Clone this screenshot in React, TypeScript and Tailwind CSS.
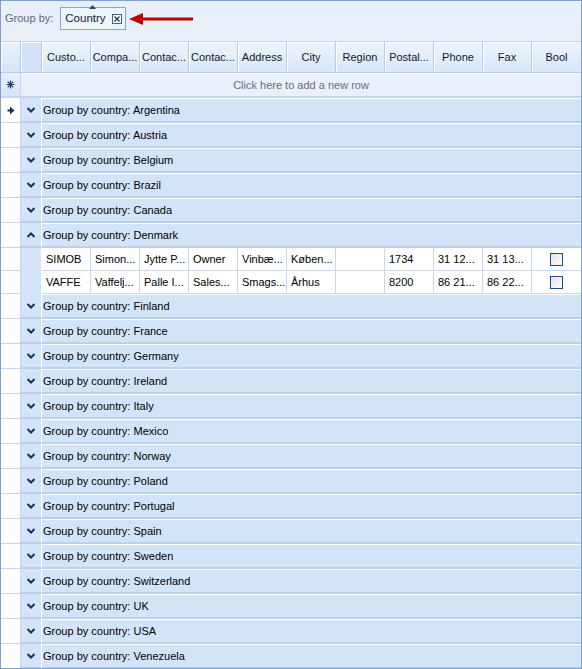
import React from 'react'

const COLUMNS = ['Custo...', 'Compa...', 'Contac...', 'Contac...', 'Address', 'City', 'Region', 'Postal...', 'Phone', 'Fax', 'Bool']

const BEFORE = ['Argentina', 'Austria', 'Belgium', 'Brazil', 'Canada']
const AFTER = ['Finland', 'France', 'Germany', 'Ireland', 'Italy', 'Mexico', 'Norway', 'Poland', 'Portugal', 'Spain', 'Sweden', 'Switzerland', 'UK', 'USA', 'Venezuela']

const ROWS = [
  ['SIMOB', 'Simon...', 'Jytte P...', 'Owner', 'Vinbæ...', 'Køben...', '', '1734', '31 12...', '31 13...'],
  ['VAFFE', 'Vaffelj...', 'Palle I...', 'Sales...', 'Smags...', 'Århus', '', '8200', '86 21...', '86 22...'],
]

function Chevron({ up }: { up?: boolean }) {
  return (
    <svg width="8" height="6" viewBox="0 0 8 6" className={up ? 'rotate-180' : ''}>
      <path d="M0.5 1 L4 4.5 L7.5 1" fill="none" stroke="#15325e" strokeWidth="2" />
    </svg>
  )
}

function CurrentArrow() {
  return (
    <svg width="8" height="9" viewBox="0 0 8 9">
      <path d="M3 0.5 L7.5 4.5 L3 8.5 Z" fill="#15325e" />
      <rect x="0.5" y="3.5" width="3" height="2" fill="#15325e" />
    </svg>
  )
}

function NewRowStar() {
  return (
    <svg width="9" height="9" viewBox="0 0 9 9">
      <path d="M4.5 0.5 V8.5 M0.5 4.5 H8.5 M1.7 1.7 L7.3 7.3 M7.3 1.7 L1.7 7.3" stroke="#1f3f6b" strokeWidth="1.2" />
    </svg>
  )
}

function GroupRow({ country, current, open }: { country: string; current?: boolean; open?: boolean }) {
  return (
    <div className="flex h-[25px] shrink-0">
      <div className="w-[20px] shrink-0 bg-white border-r border-b border-[#c4d5ec] flex items-center justify-center">
        {current && <CurrentArrow />}
      </div>
      <div className="w-[21px] shrink-0 bg-[#d4e4f8] border-r border-white border-b-2 border-b-[#bdd0ea] flex items-center justify-center">
        <Chevron up={open} />
      </div>
      <div className="flex-1 bg-[#d4e4f8] border-t border-white border-b-2 border-b-[#bdd0ea] flex items-center pl-[1px] text-black">
        Group by country: {country}
      </div>
    </div>
  )
}

function DataRow({ cells }: { cells: string[] }) {
  return (
    <div className="flex h-[23px] shrink-0">
      <div className="w-[20px] shrink-0 bg-white border-r border-b border-[#c4d5ec]" />
      <div className="w-[21px] shrink-0 bg-[#d4e4f8] border-r border-white" />
      {cells.map((c, i) => (
        <div key={i} className="w-[49px] shrink-0 bg-white border-r border-b border-[#c6d8f0] flex items-center pl-[4px] whitespace-nowrap overflow-hidden text-black">
          {c}
        </div>
      ))}
      <div className="w-[49px] shrink-0 bg-white border-b border-[#c6d8f0] flex items-center justify-center">
        <div className="w-[13px] h-[13px] border border-[#1f4a80] bg-gradient-to-br from-[#dfe3ea] to-[#ffffff]" />
      </div>
    </div>
  )
}

export default function App() {
  return (
    <div
      className="w-[582px] h-[669px] border border-[#7ea2cf] bg-white text-[11px] overflow-hidden flex flex-col"
      style={{ fontFamily: '"Liberation Sans", Arial, sans-serif' }}
    >
      {/* group panel */}
      <div className="h-[41px] shrink-0 bg-[#e8eff9] border-b border-[#c2d4ec] flex items-center gap-[7px] pl-[4px] pb-[5px]">
        <span className="text-[#5b6b82]">Group by:</span>
        <div className="relative h-[23px] border border-[#86a6d2] bg-[#eef4fc] flex items-center gap-[6px] pl-[4px] pr-[3px]">
          <svg width="7" height="4" viewBox="0 0 7 4" className="absolute left-[28px] -top-[3px]">
            <path d="M0 4 L3.5 0 L7 4 Z" fill="#1f4a80" />
          </svg>
          <span className="text-[#10233f] text-[11.5px]">Country</span>
          <div className="w-[10px] h-[10px] border border-[#3c5f8f] bg-white flex items-center justify-center">
            <svg width="6" height="6" viewBox="0 0 6 6">
              <path d="M0.5 0.5 L5.5 5.5 M5.5 0.5 L0.5 5.5" stroke="#1f3f6b" strokeWidth="1.4" />
            </svg>
          </div>
        </div>
        <svg width="64" height="12" viewBox="0 0 64 12" className="ml-[-4px]">
          <path d="M12 6 H64" stroke="#c00000" strokeWidth="3" />
          <path d="M0 6 L14 0 L14 12 Z" fill="#c00000" />
        </svg>
      </div>

      {/* header */}
      <div className="flex h-[31px] shrink-0 border-b border-[#b8cce8]">
        <div className="w-[20px] shrink-0 bg-gradient-to-b from-[#eaf1fb] to-[#d7e5f6] border-r border-[#b8cce8] shadow-[inset_1px_1px_0_#fff]" />
        <div className="w-[21px] shrink-0 bg-[#d3e2f6] border-r border-[#b8cce8] shadow-[inset_1px_1px_0_#fff]" />
        {COLUMNS.map((c, i) => (
          <div
            key={i}
            className="w-[49px] shrink-0 bg-gradient-to-b from-[#eef4fc] to-[#d8e6f7] border-r border-[#b8cce8] last:border-r-0 shadow-[inset_1px_1px_0_#fff] flex items-center justify-center whitespace-nowrap overflow-hidden text-[#111a2e] pt-[1px]"
          >
            {c}
          </div>
        ))}
      </div>

      {/* new row */}
      <div className="flex h-[25px] shrink-0 border-b-2 border-[#c4d6ee]">
        <div className="w-[20px] shrink-0 bg-gradient-to-b from-[#e8f0fa] to-[#d7e5f6] border-r border-[#c4d5ec] flex items-center justify-center">
          <NewRowStar />
        </div>
        <div className="flex-1 bg-[#e9f0f9] border-t border-white flex items-center justify-center text-[#6a6f78]">
          Click here to add a new row
        </div>
      </div>

      {BEFORE.map((c, i) => (
        <GroupRow key={c} country={c} current={i === 0} />
      ))}
      <GroupRow country="Denmark" open />
      {ROWS.map((r, i) => (
        <DataRow key={i} cells={r} />
      ))}
      {AFTER.map(c => (
        <GroupRow key={c} country={c} />
      ))}
    </div>
  )
}
